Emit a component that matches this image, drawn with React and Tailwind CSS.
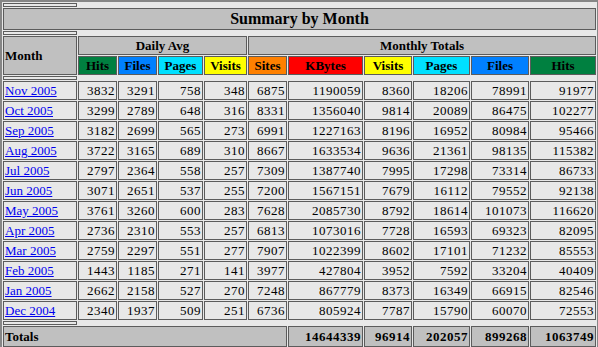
import React from 'react';

const rows = [
  ["Nov 2005", 3832, 3291, 758, 348, 6875, 1190059, 8360, 18206, 78991, 91977],
  ["Oct 2005", 3299, 2789, 648, 316, 8331, 1356040, 9814, 20089, 86475, 102277],
  ["Sep 2005", 3182, 2699, 565, 273, 6991, 1227163, 8196, 16952, 80984, 95466],
  ["Aug 2005", 3722, 3165, 689, 310, 8667, 1633534, 9636, 21361, 98135, 115382],
  ["Jul 2005", 2797, 2364, 558, 257, 7309, 1387740, 7995, 17298, 73314, 86733],
  ["Jun 2005", 3071, 2651, 537, 255, 7200, 1567151, 7679, 16112, 79552, 92138],
  ["May 2005", 3761, 3260, 600, 283, 7628, 2085730, 8792, 18614, 101073, 116620],
  ["Apr 2005", 2736, 2310, 553, 257, 6813, 1073016, 7728, 16593, 69323, 82095],
  ["Mar 2005", 2759, 2297, 551, 277, 7907, 1022399, 8602, 17101, 71232, 85553],
  ["Feb 2005", 1443, 1185, 271, 141, 3977, 427804, 3952, 7592, 33204, 40409],
  ["Jan 2005", 2662, 2158, 527, 270, 7248, 867779, 8373, 16349, 66915, 82546],
  ["Dec 2004", 2340, 1937, 509, 251, 6736, 805924, 7787, 15790, 60070, 72553],
];

const heads = [
  ["Hits", "bg-[#008040]"],
  ["Files", "bg-[#0080ff]"],
  ["Pages", "bg-[#00e0ff]"],
  ["Visits", "bg-[#ffff00]"],
  ["Sites", "bg-[#ff8000]"],
  ["KBytes", "bg-[#ff0000]"],
  ["Visits", "bg-[#ffff00]"],
  ["Pages", "bg-[#00e0ff]"],
  ["Files", "bg-[#0080ff]"],
  ["Hits", "bg-[#008040]"],
];

const cell = "border border-[#5c5c5c] p-px leading-[15px] text-[13px]";

const Sep = () => (
  <div className="col-start-1 h-[4px] border border-[#5c5c5c] bg-[#e8e8e8]"></div>
);

const App = () => {
  return (
    <div className="w-[598px] h-[347px] overflow-hidden bg-[#e8e8e8] font-['Liberation_Serif',serif] text-black">
      <div className="w-fit border-2 border-[#868686] p-px">
        <div className="grid grid-cols-[74px_39px_39px_45px_43px_39px_75px_48px_57px_58px_66px] gap-px">
          <Sep />
          <div className="col-start-1 col-span-11 border border-[#5c5c5c] bg-[#c0c0c0] p-px text-center text-[16px] leading-[18px] font-bold">
            Summary by Month
          </div>
          <Sep />
          <div className={`col-start-1 row-span-2 ${cell} bg-[#c0c0c0] font-bold flex items-center`}>
            Month
          </div>
          <div className={`col-span-4 ${cell} bg-[#c0c0c0] font-bold text-center`}>Daily Avg</div>
          <div className={`col-span-6 ${cell} bg-[#c0c0c0] font-bold text-center`}>Monthly Totals</div>
          {heads.map(([label, bg], i) => (
            <div key={i} className={`${cell} ${bg} font-bold text-center`}>
              {label}
            </div>
          ))}
          <Sep />
          {rows.map((r) => (
            <React.Fragment key={r[0]}>
              <div className={`col-start-1 ${cell} bg-[#e8e8e8]`}>
                <a href="#" className="text-[#0000ee] underline">{r[0]}</a>
              </div>
              {r.slice(1).map((v, i) => (
                <div key={i} className={`${cell} bg-[#e8e8e8] text-right tracking-[0.5px]`}>
                  {v}
                </div>
              ))}
            </React.Fragment>
          ))}
          <Sep />
          <div className={`col-start-1 col-span-6 ${cell} py-[2px] bg-[#c0c0c0] font-bold`}>Totals</div>
          {[14644339, 96914, 202057, 899268, 1063749].map((v, i) => (
            <div key={i} className={`${cell} py-[2px] bg-[#c0c0c0] font-bold text-right tracking-[0.5px]`}>
              {v}
            </div>
          ))}
          <Sep />
        </div>
      </div>
    </div>
  );
};

export default App;
